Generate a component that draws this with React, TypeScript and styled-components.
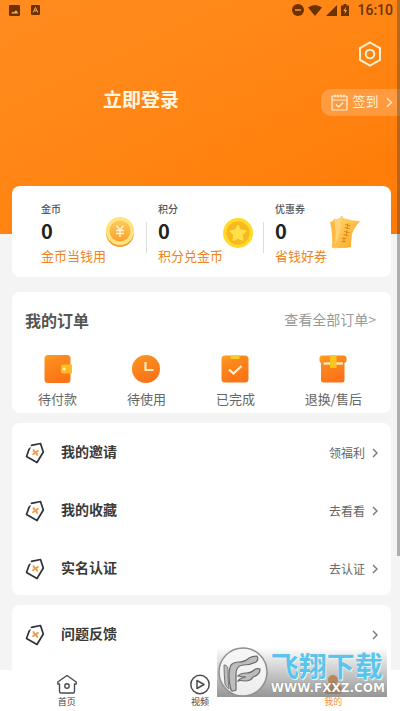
import React from 'react';
import styled, { createGlobalStyle } from 'styled-components';

const GlobalStyle = createGlobalStyle`
  * { box-sizing: border-box; }
  body {
    margin: 0;
    background: #f4f4f4;
    font-family: "Noto Sans CJK SC", "Noto Sans", sans-serif;
    color: #333;
  }
  button { font: inherit; color: inherit; background: none; border: 0; padding: 0; cursor: pointer; }
  a { color: inherit; text-decoration: none; }
  h1, h2, p, ul { margin: 0; padding: 0; }
  svg { display: block; flex: none; }
`;

const Screen = styled.div`
  position: relative;
  display: flex;
  flex-direction: column;
  height: 100vh;
  overflow: hidden;
`;

const Content = styled.main`
  flex: 1;
  min-height: 0;
  overflow: hidden;
`;

const Hero = styled.header`
  padding-bottom: 118px;
  background: linear-gradient(155deg, #ff8c1f 0%, #ff8615 45%, #ff7a05 100%);
`;

const StatusBar = styled.div`
  display: flex;
  align-items: center;
  justify-content: space-between;
  height: 20px;
  padding: 0 7px 0 9px;
  color: #6b3200;
`;

const StatusGroup = styled.div<{ $gap: number }>`
  display: flex;
  align-items: center;
  gap: ${(p) => p.$gap}px;
`;

const Clock = styled.time`
  margin-left: 4px;
  font: 500 14px/20px Roboto, sans-serif;
`;

const Settings = styled.div`
  display: flex;
  justify-content: flex-end;
  padding: 21px 18px 0 0;
`;

const LoginRow = styled.div`
  display: flex;
  align-items: center;
  justify-content: space-between;
  padding: 21px 0 0 103px;
`;

const LoginButton = styled.button`
  height: 28px;
  padding-bottom: 6px;
  font-size: 19px;
  line-height: 22px;
  font-weight: 700;
  color: #fff6e4;
`;

const CheckIn = styled.button`
  display: flex;
  align-items: center;
  gap: 4px;
  height: 27px;
  padding: 0 8px 0 10px;
  border-radius: 10px 0 0 10px;
  background: rgba(255, 255, 255, 0.2);
  color: #fff0d8;
  font-size: 13px;
  line-height: 20px;

  span { margin-right: 3px; padding-bottom: 2px; }
`;

const Cards = styled.div`
  display: flex;
  flex-direction: column;
  margin: -48px 9px 0 12px;
`;

const Card = styled.section<{ $gap: number }>`
  margin-bottom: ${(p) => p.$gap}px;
  border-radius: 8px;
  background: #fff;
`;

const Stats = styled.div`
  display: grid;
  grid-template-columns: 13fr 13fr 12fr;
  padding: 15px 8px 11px 29px;
`;

const Stat = styled.a`
  position: relative;
  display: flex;
  justify-content: space-between;
  padding-right: 22px;

  & + &::before {
    content: "";
    position: absolute;
    left: -12px;
    top: 21px;
    width: 1px;
    height: 31px;
    background: #ddd;
  }
`;

const StatText = styled.div`
  display: flex;
  flex-direction: column;
  white-space: nowrap;
`;

const StatLabel = styled.span`
  font-size: 10px;
  line-height: 16px;
  font-weight: 500;
  color: #555;
`;

const StatValue = styled.strong`
  font-size: 20px;
  line-height: 28px;
  color: #222;
`;

const StatNote = styled.span`
  width: 0;
  font-size: 13px;
  line-height: 21px;
  color: #f08321;
`;

const StatArt = styled.div`
  padding-top: 15px;
`;

const CardHead = styled.div`
  display: flex;
  align-items: center;
  justify-content: space-between;
  padding: 15px 15px 0 13px;
`;

const CardTitle = styled.h2`
  font-size: 16px;
  line-height: 26px;
  font-weight: 700;
  color: #555;
`;

const AllOrders = styled.a`
  padding-bottom: 2px;
  font-size: 14px;
  line-height: 24px;
  color: #999;
`;

const OrderTypes = styled.nav`
  display: flex;
  justify-content: space-between;
  padding: 22px 29px 3px 26px;
`;

const OrderType = styled.a`
  display: flex;
  flex-direction: column;
  align-items: center;
  font-size: 13px;
  line-height: 20px;
  gap: 6px;
  padding-bottom: 1px;
  color: #666;
`;

const Rows = styled.ul<{ $tail?: number }>`
  display: flex;
  flex-direction: column;
  gap: 2px;
  padding-bottom: ${(p) => p.$tail ?? 0}px;
  list-style: none;
`;

const RowLink = styled.a`
  display: flex;
  align-items: center;
  height: 56px;
  padding: 4px 13px 0;
`;

const RowTitle = styled.span`
  flex: 1;
  margin-left: 16px;
  padding-bottom: 4px;
  font-size: 14px;
  line-height: 20px;
  font-weight: 700;
  color: #3a3a3a;
`;

const RowAction = styled.span`
  margin-right: 7px;
  font-size: 12px;
  line-height: 20px;
  color: #666;
`;

const TabBar = styled.nav`
  display: grid;
  grid-template-columns: repeat(3, 1fr);
  height: 41px;
  background: #fff;
`;

const Tab = styled.a<{ $active?: boolean }>`
  display: flex;
  flex-direction: column;
  align-items: center;
  padding-top: 4px;
  font-size: 9px;
  line-height: 13px;
  color: ${(p) => (p.$active ? '#f5923a' : '#444')};
`;

const ScrollThumb = styled.div`
  position: absolute;
  top: 0;
  right: 0;
  width: 3px;
  height: 78.2%;
  background: rgba(60, 60, 60, 0.38);
`;

const Watermark = styled.div`
  position: absolute;
  right: 13px;
  bottom: 14px;
  display: flex;
  align-items: center;
  gap: 2px;
  height: 50px;
  padding: 0 2px 0 0;
  background: linear-gradient(rgba(110, 110, 110, 0), rgba(115, 115, 115, 0.75));
`;

const WatermarkText = styled.div`
  display: flex;
  flex-direction: column;
  white-space: nowrap;
`;

const WatermarkName = styled.span`
  font-size: 28px;
  line-height: 32px;
  font-weight: 700;
  color: #5cc4ea;
  text-shadow: 0 0 1px #fff, 1px 1px 0 #e5f6fc;
`;

const WatermarkUrl = styled.span`
  font: 700 12px/14px "DejaVu Sans", sans-serif;
  color: #fff;
  text-shadow: 0 0 1px #555;
`;

const Chevron = ({ size = 10, color = '#777' }: { size?: number; color?: string }) => (
  <svg width={size / 2 + 1} height={size} viewBox="0 0 6 10" fill="none" stroke={color} strokeWidth="1.4">
    <path d="M1 1l4 4-4 4" />
  </svg>
);

const PictureIcon = () => (
  <svg width="11" height="11" viewBox="0 0 11 11">
    <rect width="11" height="11" rx="1" fill="currentColor" />
    <path d="M2 8.5l2-2 1 1 2-2.500 2.300 3.500z" fill="#ffae58" />
  </svg>
);

const KeyboardIcon = () => (
  <svg width="9" height="10" viewBox="0 0 9 10">
    <rect width="9" height="10" rx="1" fill="currentColor" />
    <path d="M2.200 7.500l2.300-5 2.300 5M3.200 5.800h2.600" fill="none" stroke="#ffae58" />
  </svg>
);

const DoNotDisturbIcon = () => (
  <svg width="12" height="12" viewBox="0 0 12 12">
    <circle cx="6" cy="6" r="6" fill="currentColor" />
    <path d="M3 6h6" stroke="#ff8a1c" strokeWidth="1.6" />
  </svg>
);

const WifiIcon = () => (
  <svg width="14" height="11" viewBox="0 0 14 11">
    <path d="M0 2.500Q7-2.500 14 2.500L7 11z" fill="currentColor" />
  </svg>
);

const SignalIcon = () => (
  <svg width="11" height="11" viewBox="0 0 11 11">
    <path d="M11 0v11H0z" fill="currentColor" />
  </svg>
);

const BatteryIcon = () => (
  <svg width="8" height="12" viewBox="0 0 8 12">
    <path d="M2.500 0h3v1.500H8V12H0V1.500h2.500z" fill="currentColor" />
    <path d="M4.800 3L2.300 7h1.500v3l2.300-4H4.500z" fill="#ff9a3a" />
  </svg>
);

const HexIcon = () => (
  <svg width="24" height="26" viewBox="0 0 24 26" fill="none" stroke="#fff0cf" strokeWidth="2">
    <path d="M12 1.500l10 5.700v11.600l-10 5.700-10-5.700V7.200z" />
    <circle cx="12" cy="13" r="4.300" />
  </svg>
);

const CalendarIcon = () => (
  <svg width="17" height="17" viewBox="0 0 17 17" fill="none" stroke="currentColor" strokeWidth="1.200">
    <rect x="1" y="2" width="15" height="14" rx="1" />
    <path d="M1 6h15M4 .5v3M7 .5v3M10 .5v3M13 .5v3" />
    <path d="M5 10.500l2.700 2.500 4.500-4.500" strokeWidth="1.500" />
  </svg>
);

const CoinIcon = () => (
  <svg width="30" height="32" viewBox="0 0 30 32">
    <defs>
      <linearGradient id="coinFace" x2="0" y2="1">
        <stop stopColor="#ffc95a" />
        <stop offset="1" stopColor="#faa22e" />
      </linearGradient>
    </defs>
    <circle cx="14" cy="17" r="14" fill="#f2a33a" />
    <circle cx="14" cy="15" r="14" fill="#ffe37e" />
    <circle cx="14" cy="15" r="10.500" fill="url(#coinFace)" />
    <path d="M10.500 9.500l3.500 4.500 3.500-4.500M10 14.500h8M10 17.500h8M14 14v7" fill="none" stroke="#fff4cf" strokeWidth="1.400" />
  </svg>
);

const StarIcon = () => (
  <svg width="30" height="32" viewBox="0 0 30 32">
    <circle cx="15" cy="17" r="15" fill="#ffda28" />
    <circle cx="15" cy="17" r="11.500" fill="#f6b91e" />
    <path d="M15 10l2.200 4.500 5 .8-3.600 3.500.8 5-4.400-2.300-4.400 2.300.8-5-3.600-3.500 5-.8z" fill="#ffe04a" stroke="#ffe04a" strokeWidth="2" strokeLinejoin="round" />
  </svg>
);

const CouponIcon = () => (
  <svg width="31" height="33" viewBox="0 0 31 33">
    <defs>
      <linearGradient id="couponFace" x1="0" x2="1" y2="1">
        <stop stopColor="#ffd76a" />
        <stop offset="1" stopColor="#fba526" />
      </linearGradient>
    </defs>
    <path d="M0 6q3 0 5-4l6 28-9 2q1-15-2-26z" fill="#ffb93e" />
    <path d="M4 4q5 0 8-4l6 31-14 1q3-14 0-28z" fill="#ffd479" stroke="#ffbd4d" strokeWidth=".6" />
    <path d="M11 1q9 4 19 4-6 7-8 13-1 7-1 13-9 2-17 0 8-15 7-30z" fill="url(#couponFace)" />
    <path d="M15 8.500l5.500 1M14.500 11.500l5.500 1M18 7.500l-.8 5.500M14 15.500l5.500 1M13.500 18.500l5 1M17 14.500l-.8 5.500M11.500 22.500h5M11 25.500h5M14 21.500v5" stroke="#e8871a" strokeWidth="1.200" />
  </svg>
);

const IconGradient = ({ id }: { id: string }) => (
  <defs>
    <linearGradient id={id} x1="0" y1="0" x2="0.4" y2="1">
      <stop stopColor="#ffa21f" />
      <stop offset=".3" stopColor="#fb8a1e" />
      <stop offset="1" stopColor="#fb7418" />
    </linearGradient>
  </defs>
);

const WalletIcon = () => (
  <svg width="28" height="28" viewBox="0 0 28 28">
    <IconGradient id="wallet" />
    <rect x="0.500" width="26" height="28" rx="3.500" fill="url(#wallet)" />
    <path d="M19 9.500h9v9h-9a2 2 0 0 1-2-2v-5a2 2 0 0 1 2-2z" fill="#ffbd22" />
    <circle cx="20" cy="14" r="1.500" fill="#fff3c4" />
  </svg>
);

const ClockIcon = () => (
  <svg width="28" height="28" viewBox="0 0 28 28">
    <IconGradient id="clock" />
    <circle cx="14" cy="14" r="14" fill="url(#clock)" />
    <path d="M13.500 7v8h8" fill="none" stroke="#ffe9bd" strokeWidth="2.200" />
  </svg>
);

const DoneIcon = () => (
  <svg width="28" height="28" viewBox="0 0 28 28">
    <IconGradient id="done" />
    <rect x="0.500" y="0.500" width="27" height="27" rx="3.500" fill="url(#done)" />
    <path d="M9.500 0h9v4h-9z" fill="#ffc928" />
    <path d="M8 14.500l4.500 4 8-7.500" fill="none" stroke="#fff0cf" strokeWidth="2.200" />
  </svg>
);

const BoxIcon = () => (
  <svg width="28" height="28" viewBox="0 0 28 28">
    <IconGradient id="box" />
    <path d="M3 .5h22q2 0 2.500 2V6q0 1.500-2 1.800V25q0 2.500-2.500 2.500H4.500Q2 27.500 2 25V7.800Q.5 7.500.5 6V2.500Q1 .5 3 .5z" fill="url(#box)" />
    <path d="M4.500 8.500H24" stroke="#ffe9bd" strokeWidth="2.400" />
    <path d="M11 0h6.500v13H11z" fill="#ffc322" />
  </svg>
);

const TagIcon = () => (
  <svg width="20" height="22" viewBox="0 0 20 22" fill="none" strokeLinejoin="round" strokeLinecap="round">
    <path d="M6.500 3.300l9-1.800 2.800 8.500-6.300 10.500L1.500 14.500 4 7.500" stroke="#2e3138" strokeWidth="1.700" />
    <path d="M4 7.500l1.200-1.700" stroke="#2e3138" strokeWidth="1.200" />
    <path d="M8.500 8l3.800 5M13 8.800l-5 3.400" stroke="#f39a45" strokeWidth="1.700" />
    <path d="M8 9.800l4.500 1.400" stroke="#f39a45" strokeWidth=".8" />
  </svg>
);

const HomeIcon = () => (
  <svg width="20" height="21" viewBox="0 0 20 21" fill="none" stroke="#4c4c4c" strokeWidth="1.400" strokeLinejoin="round">
    <path d="M2.500 10H.8v-2L10 1.500 19.200 8v2h-1.700v7.500q0 1.500-1.500 1.500H4q-1.500 0-1.500-1.500z" />
    <circle cx="10" cy="12" r="2.200" />
  </svg>
);

const PlayIcon = () => (
  <svg width="20" height="21" viewBox="0 0 20 21" fill="none" stroke="#4c4c4c" strokeWidth="1.500" strokeLinejoin="round">
    <circle cx="10" cy="10.500" r="9.200" />
    <path d="M7 6.500l7 4-7 4z" />
  </svg>
);

const PersonIcon = () => (
  <svg width="20" height="21" viewBox="0 0 20 21" fill="#f59a3c">
    <circle cx="10" cy="6" r="5" />
    <path d="M.5 17q0-6 6-7h7q6 1 6 7-1 3-4 3h-11q-3 0-4-3z" />
  </svg>
);

const BirdLogo = () => (
  <svg width="52" height="50" viewBox="0 0 52 50">
    <circle cx="26" cy="25" r="24" fill="#f6f6f6" fillOpacity=".9" stroke="#8f8f8f" strokeWidth="1.500" />
    <path d="M14 18q3-3 8-3 6 0 10-4 4-2 8-2 2 4-1 6-6 3-13 3-7 1-7 9v16q-3 2-5 0-2-7-2-14 0-7 2-11z" fill="#bdbdbd" stroke="#6a6a6a" strokeWidth="1.200" />
    <path d="M7 18q4 0 4 5 0 10 1 19-3-2-4-5-1-10-1-19z" fill="#bdbdbd" stroke="#777" />
    <path d="M21 29q3-3 8-3 5 0 8-3 3-2 6-1 0 6-7 8-2 4-8 4-4-1-7 0 1-2 4-3l4-1q-4 0-8-1z" fill="#bdbdbd" stroke="#6a6a6a" strokeWidth="1.200" />
  </svg>
);

const stats = [
  { label: '金币', value: 0, note: '金币当钱用', art: <CoinIcon /> },
  { label: '积分', value: 0, note: '积分兑金币', art: <StarIcon /> },
  { label: '优惠券', value: 0, note: '省钱好券', art: <CouponIcon /> },
];

const orderTypes = [
  { label: '待付款', icon: <WalletIcon /> },
  { label: '待使用', icon: <ClockIcon /> },
  { label: '已完成', icon: <DoneIcon /> },
  { label: '退换/售后', icon: <BoxIcon /> },
];

const menu = [
  { title: '我的邀请', action: '领福利' },
  { title: '我的收藏', action: '去看看' },
  { title: '实名认证', action: '去认证' },
];

const MenuRow = ({ title, action }: { title: string; action?: string }) => (
  <li>
    <RowLink href="#">
      <TagIcon />
      <RowTitle>{title}</RowTitle>
      {action && <RowAction>{action}</RowAction>}
      <Chevron />
    </RowLink>
  </li>
);

export default function App() {
  return (
    <Screen>
      <GlobalStyle />
      <Content>
        <Hero>
          <StatusBar>
            <StatusGroup $gap={11}>
              <PictureIcon />
              <KeyboardIcon />
            </StatusGroup>
            <StatusGroup $gap={4}>
              <DoNotDisturbIcon />
              <WifiIcon />
              <SignalIcon />
              <BatteryIcon />
              <Clock>16:10</Clock>
            </StatusGroup>
          </StatusBar>
          <Settings>
            <button aria-label="设置">
              <HexIcon />
            </button>
          </Settings>
          <LoginRow>
            <LoginButton>立即登录</LoginButton>
            <CheckIn>
              <CalendarIcon />
              <span>签到</span>
              <Chevron size={11} color="#ffe9c8" />
            </CheckIn>
          </LoginRow>
        </Hero>
        <Cards>
          <Card $gap={15}>
            <Stats>
              {stats.map((s) => (
                <Stat href="#" key={s.label}>
                  <StatText>
                    <StatLabel>{s.label}</StatLabel>
                    <StatValue>{s.value}</StatValue>
                    <StatNote>{s.note}</StatNote>
                  </StatText>
                  <StatArt>{s.art}</StatArt>
                </Stat>
              ))}
            </Stats>
          </Card>
          <Card $gap={10}>
            <CardHead>
              <CardTitle>我的订单</CardTitle>
              <AllOrders href="#">查看全部订单&gt;</AllOrders>
            </CardHead>
            <OrderTypes>
              {orderTypes.map((o) => (
                <OrderType href="#" key={o.label}>
                  {o.icon}
                  {o.label}
                </OrderType>
              ))}
            </OrderTypes>
          </Card>
          <Card $gap={10}>
            <Rows>
              {menu.map((m) => (
                <MenuRow key={m.title} {...m} />
              ))}
            </Rows>
          </Card>
          <Card $gap={0}>
            <Rows $tail={24}>
              <MenuRow title="问题反馈" />
            </Rows>
          </Card>
        </Cards>
      </Content>
      <TabBar>
        <Tab href="#">
          <HomeIcon />
          首页
        </Tab>
        <Tab href="#">
          <PlayIcon />
          视频
        </Tab>
        <Tab href="#" $active>
          <PersonIcon />
          我的
        </Tab>
      </TabBar>
      <Watermark>
        <BirdLogo />
        <WatermarkText>
          <WatermarkName>飞翔下载</WatermarkName>
          <WatermarkUrl>WWW.FXXZ.COM</WatermarkUrl>
        </WatermarkText>
      </Watermark>
      <ScrollThumb />
    </Screen>
  );
}
